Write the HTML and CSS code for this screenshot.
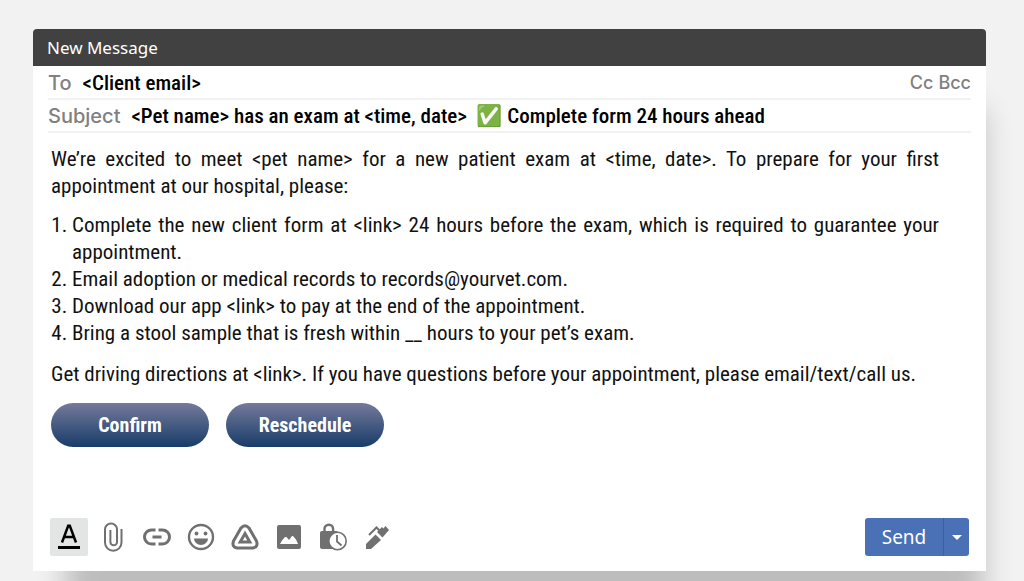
FILE: index.html
```html
<!DOCTYPE html>
<html lang="en">
<head>
    <meta charset="UTF-8">
    <meta name="viewport" content="width=device-width, initial-scale=1.0">
    <title>New Message</title>
    <link rel="stylesheet" href="styles.css">
</head>
<body>
    <form class="compose" onsubmit="return false">
        <header class="compose-header">
            <h1>New Message</h1>
        </header>

        <div class="fields">
            <div class="field">
                <label for="to">To</label>
                <input id="to" type="text" value="&lt;Client email&gt;">
                <div class="copies">
                    <button type="button">Cc</button>
                    <button type="button">Bcc</button>
                </div>
            </div>
            <div class="field">
                <label for="subject">Subject</label>
                <input id="subject" type="text" value="&lt;Pet name&gt; has an exam at &lt;time, date&gt;  ✅ Complete form 24 hours ahead">
            </div>
        </div>

        <div class="message">
            <p>We’re excited to meet &lt;pet name&gt; for a new patient exam at &lt;time, date&gt;. To prepare for your first appointment at our hospital, please:</p>
            <ol>
                <li>Complete the new client form at &lt;link&gt; 24 hours before the exam, which is required to guarantee your appointment.</li>
                <li>Email adoption or medical records to records@yourvet.com.</li>
                <li>Download our app &lt;link&gt; to pay at the end of the appointment.</li>
                <li>Bring a stool sample that is fresh within __ hours to your pet’s exam.</li>
            </ol>
            <p>Get driving directions at &lt;link&gt;. If you have questions before your appointment, please email/text/call us.</p>
            <div class="actions">
                <button type="button" class="pill">Confirm</button>
                <button type="button" class="pill">Reschedule</button>
            </div>
        </div>

        <footer class="compose-footer">
            <div class="tools">
                <button type="button" class="tool active" aria-label="Formatting options">
                    <svg width="24" height="26" viewBox="0 0 24 26">
                        <path d="M5 18.500L11.200 1.800h1.600L19 18.500M8 13h8" fill="none" stroke="currentColor" stroke-width="2.500"/>
                        <path d="M1 22h22v3H1z"/>
                    </svg>
                </button>
                <button type="button" class="tool" aria-label="Attach files">
                    <svg width="20" height="30" viewBox="0 0 20 30" class="line">
                        <path d="M18.500 7v13.500a8 8 0 0 1-16.500 0V7.500a6 6 0 0 1 12 0v12.500a3.300 3.300 0 0 1-6.600 0V8"/>
                    </svg>
                </button>
                <button type="button" class="tool" aria-label="Insert link">
                    <svg width="28" height="18" viewBox="0 0 28 18" class="line thick">
                        <path d="M12.500 2H8.500a7 7 0 0 0 0 14H12.500M15.500 2h4a7 7 0 0 1 0 14H15.500M9.500 9h9"/>
                    </svg>
                </button>
                <button type="button" class="tool" aria-label="Insert emoji">
                    <svg width="28" height="28" viewBox="0 0 28 28">
                        <circle cx="14" cy="14" r="12" fill="none" stroke="currentColor" stroke-width="2.400"/>
                        <circle cx="9.500" cy="10.500" r="1.900"/>
                        <circle cx="18.500" cy="10.500" r="1.900"/>
                        <path d="M7 15.500h14a7 6.500 0 0 1-14 0z"/>
                    </svg>
                </button>
                <button type="button" class="tool" aria-label="Insert files using Drive">
                    <svg width="28" height="26" viewBox="0 0 28 26" class="line thick">
                        <path d="M10 4Q14 -.5 18 4L25.500 17Q27.500 23 22 24H6Q.5 23 2.500 17z"/>
                        <path d="M14 9.500l4.800 8.500H9.200z"/>
                    </svg>
                </button>
                <button type="button" class="tool" aria-label="Insert photo">
                    <svg width="24" height="24" viewBox="0 0 24 24">
                        <path fill-rule="evenodd" d="M2 0h20a2 2 0 0 1 2 2v20a2 2 0 0 1-2 2H2a2 2 0 0 1-2-2V2a2 2 0 0 1 2-2zM3 19h18l-2-4.500-3-3.500H15l-3 4-2.500-3H8L5 15.500z"/>
                    </svg>
                </button>
                <button type="button" class="tool" aria-label="Confidential mode">
                    <svg width="27" height="28" viewBox="0 0 27 28">
                        <path d="M4.500 9V6a4.300 4.300 0 0 1 8.600 0v3" fill="none" stroke="currentColor" stroke-width="2.400"/>
                        <path d="M2 8h14a2 2 0 0 1 2 2v16H2a2 2 0 0 1-2-2V10a2 2 0 0 1 2-2z"/>
                        <circle cx="17.500" cy="18" r="8.700" fill="#fff" stroke="currentColor" stroke-width="1.600"/>
                        <path d="M17 12v6.500l4.500 4" fill="none" stroke="currentColor" stroke-width="1.800"/>
                    </svg>
                </button>
                <button type="button" class="tool" aria-label="Insert signature">
                    <svg width="24" height="24" viewBox="0 0 24 24">
                        <path d="M1 24v-5L10.500 9.500l5.500 5.500L6 24z"/>
                        <path d="M12 7l5-5 1.500 1.500L20.500 1 24 5l-6.500 7.500z"/>
                        <path d="M4 10L11.500 2.500 15 6" fill="none" stroke="currentColor" stroke-width="2"/>
                    </svg>
                </button>
            </div>
            <div class="send">
                <button type="submit">Send</button>
                <button type="button" class="send-more" aria-label="More send options">
                    <svg width="10" height="5" viewBox="0 0 10 5"><path d="M0 0h10L5 5z"/></svg>
                </button>
            </div>
        </footer>
    </form>
</body>
</html>
```

FILE: styles.css
```css
* {
    box-sizing: border-box;
}
body {
    display: flex;
    min-height: 100vh;
    margin: 0;
    padding: 29px 38px 10px 33px;
    background-color: #f2f2f2;
    font-family: "Liberation Sans Narrow", "Roboto Condensed", "Open Sans Condensed", sans-serif;
    font-size: 21px;
    color: #111;
}
button, input {
    border: 0;
    padding: 0;
    background: none;
    font: inherit;
    color: inherit;
}
button {
    cursor: pointer;
}
svg {
    display: block;
    fill: currentColor;
}
.compose {
    display: flex;
    flex-direction: column;
    flex: 1;
    min-width: 0;
    background-color: #fff;
    border-radius: 4px 4px 0 0;
    box-shadow: 15px 62px 28px -18px rgba(0, 0, 0, 0.22);
}
.compose-header {
    padding: 0 14px;
    background-color: #414141;
    border-radius: 4px 4px 0 0;
    color: #fff;
}
.compose-header h1 {
    margin: 0;
    font: 17px/37px "Noto Sans", sans-serif;
}
.fields {
    padding: 1px 15px 0;
}
.field {
    display: flex;
    align-items: center;
    gap: 11px;
    height: 33px;
    border-bottom: 2px solid #f2f2f2;
}
.field label, .copies {
    font-family: Inter, sans-serif;
    font-size: 20px;
    font-weight: 500;
    color: #808080;
}
.field input {
    flex: 1;
    min-width: 0;
    font-weight: 500;
    color: #000;
}
.copies {
    display: flex;
    gap: 5px;
    font-size: 18px;
}
.message {
    padding: 13px 47px 0 18px;
    line-height: 27px;
    text-align: justify;
}
.message p {
    margin: 0;
}
.message ol {
    margin: 12px 0 14px;
    padding-left: 21px;
}
.actions {
    display: flex;
    gap: 17px;
    margin-top: 15px;
}
.pill {
    width: 158px;
    height: 44px;
    border-radius: 22px;
    background-image: linear-gradient(#757a9b, #173c69);
    font-size: 20px;
    font-weight: bold;
    color: #fff;
}
.compose-footer {
    display: flex;
    justify-content: space-between;
    align-items: center;
    margin-top: auto;
    padding: 15px 17px;
}
.tools {
    display: flex;
    gap: 6px;
}
.tool {
    display: flex;
    align-items: center;
    justify-content: center;
    width: 38px;
    height: 38px;
    color: #707070;
}
.tool.active {
    background-color: #e2e5e4;
    border-radius: 2px;
    color: #000;
}
.line {
    fill: none;
    stroke: currentColor;
    stroke-width: 2;
}
.thick {
    stroke-width: 3;
}
.send {
    display: flex;
    height: 38px;
    border-radius: 3px;
    background-color: #4a70b5;
    font-family: "Noto Sans", sans-serif;
    font-size: 19px;
    color: #fff;
}
.send button {
    width: 78px;
}
.send .send-more {
    display: flex;
    align-items: center;
    justify-content: center;
    width: 26px;
    border-left: 1px solid #3c60a4;
}
```
